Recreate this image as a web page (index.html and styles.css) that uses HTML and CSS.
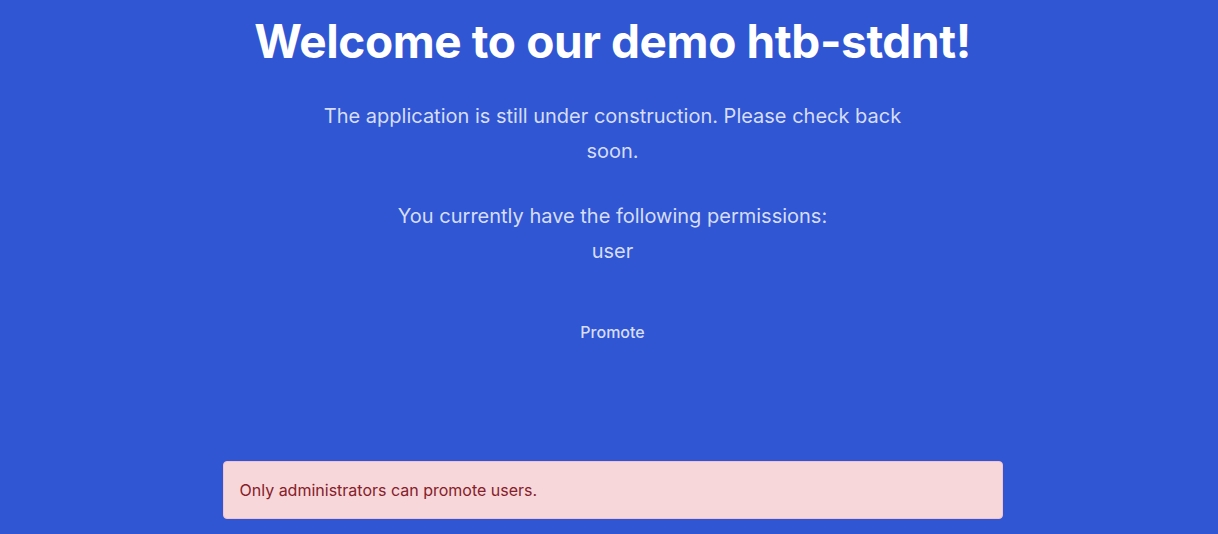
FILE: index.html
```html
<!DOCTYPE html>
<html>
<head>
<meta charset="utf-8">
<link rel="stylesheet" href="styles.css">
</head>
<body>
<main class="page">
  <h1 class="title">Welcome to our demo htb-stdnt!</h1>
  <p class="lead">The application is still under construction. Please check back soon.</p>
  <p class="lead perms">You currently have the following permissions:<br>user</p>
  <button class="promote">Promote</button>
  <div class="alert">Only administrators can promote users.</div>
</main>
</body>
</html>
```
FILE: styles.css
```css
html, body {
  margin: 0;
  padding: 0;
  background: #3056d3;
  height: 100%;
}
body {
  font-family: Inter, "Noto Sans", sans-serif;
  padding-left: 7px;
}
.page {
  display: flex;
  flex-direction: column;
  align-items: center;
  text-align: center;
}
.title {
  margin: 11px 0 0;
  font-size: 46px;
  line-height: 60px;
  font-weight: 700;
  color: #ffffff;
  letter-spacing: -0.4px;
}
.lead {
  max-width: 600px;
  margin: 28px 0 0;
  font-size: 20px;
  line-height: 35px;
  color: #d6ddf6;
}
.perms {
  margin-top: 30px;
}
.promote {
  margin-top: 45px;
  background: transparent;
  border: 0;
  font-family: inherit;
  font-size: 16px;
  font-weight: 500;
  color: #d6ddf6;
  padding: 8px 16px;
}
.alert {
  margin-top: 111px;
  width: 780px;
  box-sizing: border-box;
  padding: 18px 16px;
  text-align: left;
  background: #f8d7da;
  border: 1px solid #f5c2c7;
  border-radius: 4px;
  color: #842029;
  font-size: 16px;
  line-height: 20px;
}
```
